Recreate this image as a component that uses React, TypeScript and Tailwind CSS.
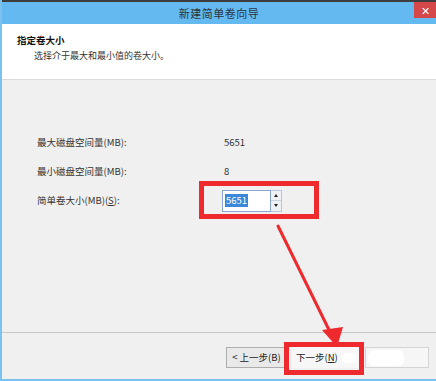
import React from "react";

const font = { fontFamily: '"Microsoft YaHei", "Noto Sans CJK SC", sans-serif' };

function Spinner() {
  return (
    <div className="flex flex-col w-[11px] h-[22px] border border-l-0 border-[#b9c6d8] bg-[#eef0f3]">
      <div className="flex-1 flex items-center justify-center border-b border-[#c9d1dc]">
        <span className="block w-0 h-0 border-l-[2.5px] border-r-[2.5px] border-b-[3px] border-l-transparent border-r-transparent border-b-[#222]" />
      </div>
      <div className="flex-1 flex items-center justify-center">
        <span className="block w-0 h-0 border-l-[2.5px] border-r-[2.5px] border-t-[3px] border-l-transparent border-r-transparent border-t-[#222]" />
      </div>
    </div>
  );
}

function Row({ label, children }: { label: React.ReactNode; children: React.ReactNode }) {
  return (
    <div className="flex items-center h-[29px]">
      <div className="w-[185px] text-[9.5px] text-[#333]">{label}</div>
      <div className="flex items-center">{children}</div>
    </div>
  );
}

export default function App() {
  return (
    <div
      className="relative w-[436px] h-[381px] overflow-hidden bg-[#f0f0f0] flex flex-col border-l-2 border-[#7cc2ef]"
      style={font}
    >
      {/* window top edge */}
      <div className="h-[2px] bg-[#3d3d3d] shrink-0" />

      {/* Title bar */}
      <div className="relative h-[22px] shrink-0 bg-[#64baf0] flex items-center justify-center">
        <span className="text-[11px] text-[#2a3440] tracking-[0.5px]">新建简单卷向导</span>
        <div className="absolute right-0 top-0 w-[22px] h-[16px] bg-[#d6474a] flex items-center justify-center text-white text-[11px] leading-none">
          ✕
        </div>
      </div>

      {/* Header */}
      <div className="h-[56px] shrink-0 bg-white border-b border-[#dcdcdc] pl-[15px] pt-[10px]">
        <div className="text-[9.5px] font-bold text-[#111] leading-[12px]">指定卷大小</div>
        <div className="text-[9px] text-[#333] leading-[12px] mt-[4px] pl-[17px]">选择介于最大和最小值的卷大小。</div>
      </div>

      {/* Body */}
      <div className="flex-1 flex flex-col pl-[35px] pt-[48px]">
        <Row label="最大磁盘空间量(MB):">
          <span className="pl-[2px] text-[9.5px] text-[#333]">5651</span>
        </Row>
        <Row label="最小磁盘空间量(MB):">
          <span className="pl-[2px] text-[9.5px] text-[#333]">8</span>
        </Row>
        <Row
          label={
            <>
              简单卷大小(MB)(<span className="underline">S</span>):
            </>
          }
        >
          <div className="flex">
            <div className="w-[49px] h-[22px] bg-white border border-[#8aa6cf] flex items-center pl-[2px]">
              <span className="bg-[#3b87d8] text-white text-[9.5px] leading-[13px] px-[1px]">5651</span>
            </div>
            <Spinner />
          </div>
        </Row>
      </div>

      {/* Footer */}
      <div className="h-[47px] shrink-0 border-t border-[#c8c8c8] flex items-start justify-end pr-[7px] pt-[14px] gap-[5px]">
        <div className="w-[61px] h-[21px] border border-[#adadad] bg-[#e9e9e9] flex items-center justify-center text-[9.5px] text-[#222]">
          &lt; 上一步(B)
        </div>
        <div className="w-[68px] h-[21px] bg-[#f7f7f7] flex items-center pl-[4px] text-[9.5px] text-[#222]">
          下一步(<span className="underline">N</span>)
          <span className="ml-[4px] w-[14px] h-[10px] bg-white rounded-sm" />
        </div>
        <div className="w-[64px] h-[21px] border border-[#d4d4d4] bg-[#f6f6f6] flex items-center">
          <span className="ml-[2px] w-[36px] h-[16px] bg-white rounded-md" />
        </div>
      </div>
      <div className="h-[2px] shrink-0 bg-[#7cc2ef]" />

      {/* Annotation: red boxes and arrow */}
      <div className="absolute left-[197px] top-[181px] w-[120px] h-[38px] border-[5px] border-[#ee2a2e]" />
      <div className="absolute left-[282px] top-[342px] w-[80px] h-[33px] border-[5px] border-[#ee2a2e]" />
      <svg className="absolute left-0 top-0" width="436" height="381" viewBox="0 0 436 381">
        <line x1="276" y1="226" x2="331" y2="338" stroke="#ee2a2e" strokeWidth="3" strokeLinecap="round" />
        <polygon points="320,330 341,327 335,347" fill="#ee2a2e" />
      </svg>
    </div>
  );
}
